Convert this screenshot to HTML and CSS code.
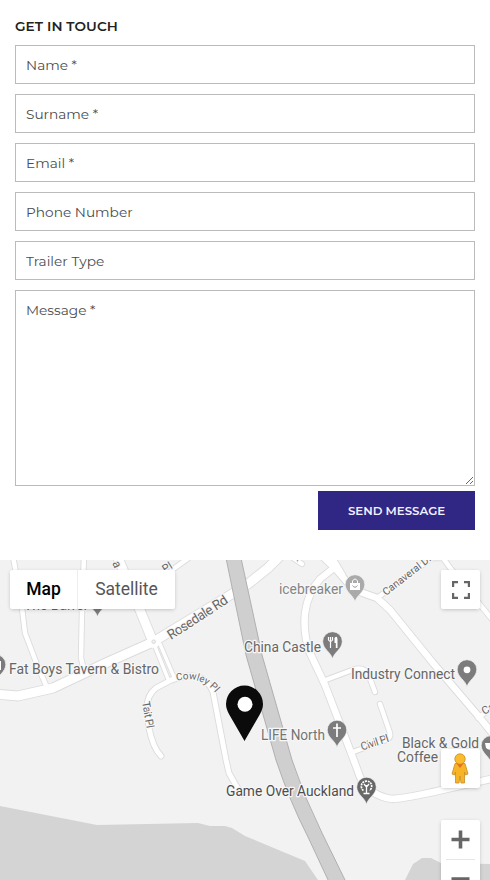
FILE: index.html
```html
<!DOCTYPE html>
<html lang="en">
<head>
<meta charset="utf-8">
<title>Get in touch</title>
<link rel="stylesheet" href="styles.css">
</head>
<body>
<form class="contact">
  <h2 class="title">GET IN TOUCH</h2>
  <input class="field name" placeholder="Name *">
  <input class="field surname" placeholder="Surname *">
  <input class="field email" placeholder="Email *">
  <input class="field phone" placeholder="Phone Number">
  <input class="field" placeholder="Trailer Type">
  <textarea class="field message" placeholder="Message *"></textarea>
  <button class="send" type="button">SEND MESSAGE</button>
</form>
<section class="map">
  <svg class="tiles" viewBox="0 560 490 320" width="490" height="320">
    <defs>
      <path id="pin" d="M0 17C-1.500 10-9.500 7.500-9.800-.500A9.800 9.800 0 1 1 9.800-.500C9.500 7.500 1.500 10 0 17Z"/>
      <g id="roads">
        <path class="w5" d="M13 556L22 608L25 633L36 662L48 690M84 556L82 610L81 658L85 674"/>
        <path class="w9" d="M-5 694L18 696L53 688L108 662L153 642L227 597L248 584L268 568L283 553M153 642L140 610L118 558"/>
        <path class="w5" d="M160 580L172 570L190 557"/>
        <path class="w4" d="M154 644L168 679M160 644L174 677"/>
        <path class="w6" d="M175 678L156 688Q147 695 147 708L149 728Q153 748 161 756M172 680Q203 668 213 692L226 760L229 773L238 789L243 794"/>
        <path class="w7" d="M335 567L320 579Q308 592 305 613Q303 635 310 653L325 685L340 724L353 758L360 777Q370 796 392 799Q408 798 442 790L495 778"/>
        <path class="w7" d="M321 555L335 568L347 582Q353 589 363 593L377 598L390 610L433 663L480 718L497 739M330 555L342 575"/>
        <path class="w5" d="M377 598L432 558H443L451 569L495 623M478 718L495 705"/>
        <path class="w5" d="M323 681L355 669Q365 667 369 676L375 692M380 704L390 733Q391 738 386 740L353 752"/>
        <path class="w5" d="M290 556L302 564"/>
      </g>
    </defs>
    <rect y="560" width="490" height="320" fill="#f2f2f2"/>
    <path fill="#d4d4d4" d="M0 806L97 825L198 823L210 826H225L232 828L245 836L305 861L318 880H0ZM405 880L413 864L422 858H431L441 863L490 864V880Z"/>
    <use href="#roads" class="casing"/>
    <use href="#roads" class="surface"/>
    <circle cx="153.500" cy="641.500" r="6.500" fill="#fff"/>
    <circle cx="153.700" cy="641.700" r="1.800" fill="#f2f2f2" stroke="#ccc" stroke-width=".7"/>
    <path fill="#cfcfcf" stroke="#b0b0b0" d="M226 558L246 655L276 760Q290 802 308 837L329 882H346L322 833Q304 797 292 760L262 655L241 558Z"/>
    <g class="street">
      <text transform="translate(171 640) rotate(-33)" font-size="13.500" textLength="69">Rosedale Rd</text>
      <text transform="translate(386 596) rotate(-38)" font-size="10.500" textLength="59">Canaveral Dr</text>
      <text transform="translate(362 750.500) rotate(-18)" font-size="11" textLength="29">Civil Pl</text>
      <text transform="translate(142 702) rotate(80)" font-size="11" textLength="27">Tait Pl</text>
      <text transform="translate(165 573) rotate(-32)" font-size="11">Pl</text>
      <text transform="translate(112 563) rotate(65)" font-size="12">a</text>
      <text transform="translate(484 715) rotate(-28)" font-size="11">Ca</text>
      <path id="cowley" d="M176.500 681Q202 674 218 696" fill="none" stroke="none"/>
      <text font-size="10"><textPath href="#cowley">Cowley Pl</textPath></text>
    </g>
    <g class="place">
      <text x="9" y="673.500" textLength="150" lengthAdjust="spacingAndGlyphs">Fat Boys Tavern &amp; Bistro</text>
      <text x="24" y="609.500" textLength="63" lengthAdjust="spacingAndGlyphs">The Barrel</text>
      <text x="279" y="594" textLength="64" lengthAdjust="spacingAndGlyphs" class="light">icebreaker</text>
      <text x="244" y="651.500" textLength="77" lengthAdjust="spacingAndGlyphs">China Castle</text>
      <text x="351" y="679" textLength="104" lengthAdjust="spacingAndGlyphs">Industry Connect</text>
      <text x="261" y="739.500" textLength="64" lengthAdjust="spacingAndGlyphs" class="mid">LIFE North</text>
      <text x="226" y="796" textLength="128" lengthAdjust="spacingAndGlyphs" class="dark">Game Over Auckland</text>
      <text x="402" y="748" textLength="77" lengthAdjust="spacingAndGlyphs">Black &amp; Gold</text>
      <text x="397" y="761.500" textLength="41" lengthAdjust="spacingAndGlyphs">Coffee</text>
    </g>
    <g class="pins">
      <use href="#pin" x="-4" y="665"/>
      <use href="#pin" x="97.500" y="600"/>
      <use href="#pin" x="297.500" y="546" fill="#999"/>
      <use href="#pin" x="355" y="585" fill="#aaa"/>
      <use href="#pin" x="332.500" y="642"/>
      <use href="#pin" x="467" y="670"/>
      <use href="#pin" x="337" y="730.500"/>
      <use href="#pin" x="366.500" y="787.500" fill="#686868"/>
      <use href="#pin" x="491" y="746"/>
    </g>
    <path fill="#fff" d="M350 583H360V590H350Z"/>
    <path fill="none" stroke="#fff" d="M352.500 583V581Q355 577 357.500 581V583"/>
    <path fill="none" stroke="#999" d="M352.500 585.500Q355 589 357.500 585.500"/>
    <path fill="none" stroke="#fff" stroke-width="1.200" d="M328.500 637V640Q330.500 643 332.500 640V637M330.500 637V648"/>
    <path fill="#fff" d="M334.500 638Q337 635 337.500 639V648H335.800V643H334.500Z"/>
    <circle cx="467" cy="669.800" r="3.400" fill="#fff"/>
    <path fill="none" stroke="#fff" stroke-width="1.700" d="M337 723.500V737M333 728H341"/>
    <path fill="none" stroke="#fff" stroke-width="1.700" stroke-dasharray="2 .8" d="M363.500 790.500A5.200 5.200 0 1 1 369.500 790.500"/>
    <path d="M366.500 785V793M363.500 793.500H369.500M364 784L366.500 787L369 784" fill="none" stroke="#fff" stroke-width="1.300"/>
    <path fill="#fff" d="M485 743H495V747Q490 752 486 748ZM-2 661H1V670H-2Z"/>
    <path fill="#0b0b0b" d="M244.500 741L229.500 715Q226 709 226 704A18.500 18.500 0 0 1 263 704Q263 709 259.500 715Z"/>
    <circle cx="245" cy="704.300" r="7.500" fill="#fff"/>
  </svg>
  <div class="types control"><span class="active">Map</span><span>Satellite</span></div>
  <div class="full control">
    <svg width="18" height="18" viewBox="0 0 18 18"><path fill="none" stroke="#666" stroke-width="2.200" d="M1.100 6V1.100H6M12 1.100H16.900V6M16.900 12V16.900H12M6 16.900H1.100V12"/></svg>
  </div>
  <div class="person control">
    <svg width="18" height="32" viewBox="0 0 18 32"><path fill="#f8b427" stroke="#c88b25" stroke-width=".8" d="M4 10.500H14L17 21L14.500 22L13.500 19V30H10L9 23L8 30H4.500V19L3.500 22L1 21Z"/><path fill="#e66b24" d="M5.500 10.500H12.500L9 15Z"/><circle cx="9" cy="6" r="5.200" fill="#fbbc2c" stroke="#c88b25" stroke-width=".8"/></svg>
  </div>
  <div class="zoom control">
    <svg width="39" height="78" viewBox="0 0 39 78"><path fill="none" stroke="#666" stroke-width="3.600" d="M10.500 19.500H28.500M19.500 10.500V28.500M10.500 59H28.500"/><path stroke="#e6e6e6" d="M5 39.500H34"/></svg>
  </div>
</section>
</body>
</html>
```
FILE: styles.css
```css
* { box-sizing: border-box; }
body { margin: 0; width: 490px; height: 880px; overflow: hidden; background: #fff; }
.contact {
  height: 560px;
  padding: 16px 15px 0;
  display: flex;
  flex-direction: column;
  font-family: Montserrat, Inter, sans-serif;
}
.title { margin: 0 0 9px; font-size: 13.65px; line-height: 20px; font-weight: 600; letter-spacing: .08px; color: #222; }
.field {
  width: 460px;
  height: 39px;
  flex: none;
  margin: 0 0 10px;
  padding: 0 10px;
  border: 1px solid #bbb;
  border-radius: 0;
  background: #fff;
  font: 400 13.7px/18px Montserrat, Inter, sans-serif;
  letter-spacing: 0;
  outline: none;
}
.field::placeholder { color: #4c4c4c; opacity: 1; }
.message { height: 196px; margin-bottom: 5px; padding-top: 10px; resize: both; }
.send {
  align-self: flex-end;
  width: 157px;
  height: 39px;
  padding: 0;
  border: 0;
  background: #302683;
  color: #f3f0ff;
  font: 600 11.75px/18px Montserrat, Inter, sans-serif;
}
.map { position: relative; height: 320px; overflow: hidden; font-family: Roboto, sans-serif; }
.tiles { display: block; }
.casing { stroke: #dcdcdc; --extra: 1.8px; }
.surface { stroke: #fff; --extra: 0px; }
#roads path { fill: none; stroke-linecap: round; stroke-linejoin: round; }
.w4 { stroke-width: calc(3.5px + var(--extra)); }
.w5 { stroke-width: calc(4.5px + var(--extra)); }
.w6 { stroke-width: calc(5px + var(--extra)); }
.w7 { stroke-width: calc(6.5px + var(--extra)); }
.w9 { stroke-width: calc(9px + var(--extra)); }
.street, .place { fill: #666; stroke: #f7f7f7; stroke-width: 2.5px; paint-order: stroke; stroke-linejoin: round; }
.place { font-size: 14px; }
.light { fill: #858585; }
.mid { fill: #747474; }
.dark { fill: #4d4d4d; }
.pins { fill: #7c7c7c; stroke: #f5f5f5; stroke-width: .7px; }
.control {
  position: absolute;
  display: flex;
  align-items: center;
  justify-content: center;
  background: #fff;
  border-radius: 2px;
  box-shadow: 0 1px 4px -1px rgba(0, 0, 0, .3);
}
.types { left: 10px; top: 10px; width: 165px; height: 39px; font-size: 17.5px; color: #565656; }
.types span { flex: 1; text-align: center; line-height: 39px; }
.types .active { flex: 0 0 68px; color: #000; font-weight: 500; border-right: 1px solid #eee; }
.full { left: 441px; top: 10px; width: 39px; height: 39px; }
.person { left: 441px; top: 189px; width: 39px; height: 39px; }
.person svg { margin-right: 1px; }
.zoom { left: 441px; top: 260px; width: 39px; height: 78px; }
```
